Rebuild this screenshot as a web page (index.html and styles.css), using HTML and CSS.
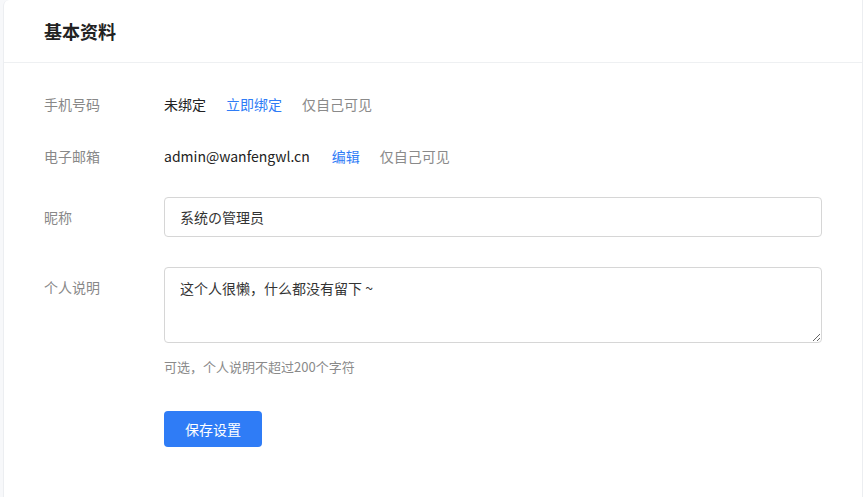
FILE: index.html
```html
<!DOCTYPE html>
<html lang="zh-CN">
<head>
<meta charset="utf-8">
<link rel="stylesheet" href="styles.css">
</head>
<body>
<div class="card">
  <div class="card-header"><h2 class="title">基本资料</h2></div>
  <div class="card-body">
    <div class="row row-text">
      <div class="label">手机号码</div>
      <div class="value">
        <span class="val">未绑定</span>
        <a class="link">立即绑定</a>
        <span class="muted">仅自己可见</span>
      </div>
    </div>
    <div class="row row-text row-email">
      <div class="label">电子邮箱</div>
      <div class="value">
        <span class="val">admin@wanfengwl.cn</span>
        <a class="link link-edit">编辑</a>
        <span class="muted">仅自己可见</span>
      </div>
    </div>
    <div class="row row-input">
      <div class="label">昵称</div>
      <div class="value"><input class="input" type="text" value="系统の管理员"></div>
    </div>
    <div class="row row-area">
      <div class="label label-top">个人说明</div>
      <div class="value value-col">
        <textarea class="textarea">这个人很懒，什么都没有留下 ~</textarea>
        <div class="hint">可选，个人说明不超过200个字符</div>
        <button class="btn">保存设置</button>
      </div>
    </div>
  </div>
</div>
</body>
</html>
```

FILE: styles.css
```css
html, body {
  margin: 0;
  padding: 0;
  background: #f7f8fa;
  font-family: "Noto Sans CJK SC", "Noto Sans", sans-serif;
  font-size: 14px;
  color: #333;
}
.card {
  margin-left: 3px;
  width: 860px;
  height: 520px;
  background: #fff;
  border: 1px solid #eceef1;
  border-top: none;
  border-radius: 6px 0 0 0;
  box-sizing: border-box;
}
.card-header {
  height: 62px;
  border-bottom: 1px solid #eef0f2;
  display: flex;
  align-items: center;
  padding-left: 40px;
}
.title {
  margin: 0;
  font-size: 18px;
  font-weight: 700;
  color: #222;
}
.card-body {
  padding: 21px 40px 0 40px;
  display: flex;
  flex-direction: column;
}
.row {
  display: flex;
}
.label {
  width: 120px;
  flex: none;
  color: #888;
  line-height: 40px;
}
.value {
  flex: 1;
  display: flex;
  align-items: center;
  gap: 20px;
  height: 40px;
}
.val { color: #222; }
.link { color: #2f7cf6; text-decoration: none; }
.link-edit { margin-left: 2px; }
.muted { color: #8a8a8a; }
.row-email { margin-top: 12px; }
.row-input { margin-top: 21px; }
.row-area { margin-top: 30px; }
.input {
  width: 100%;
  height: 40px;
  box-sizing: border-box;
  border: 1px solid #d6d6d6;
  border-radius: 4px;
  padding: 0 15px;
  font-family: inherit;
  font-size: 14px;
  color: #333;
  outline: none;
}
.label-top {
  line-height: 20px;
  padding-top: 10px;
}
.value-col {
  flex-direction: column;
  align-items: flex-start;
  height: auto;
  gap: 0;
}
.textarea {
  width: 100%;
  height: 76px;
  box-sizing: border-box;
  border: 1px solid #d6d6d6;
  border-radius: 4px;
  padding: 10px 15px;
  font-family: inherit;
  font-size: 14px;
  line-height: 20px;
  color: #333;
  resize: vertical;
  outline: none;
  display: block;
}
.hint {
  margin-top: 14px;
  line-height: 20px;
  font-size: 13px;
  color: #8a8a8a;
}
.btn {
  margin-top: 34px;
  width: 98px;
  height: 36px;
  border: none;
  border-radius: 4px;
  background: #2f7cf6;
  color: #fff;
  font-family: inherit;
  font-size: 14px;
}
```
